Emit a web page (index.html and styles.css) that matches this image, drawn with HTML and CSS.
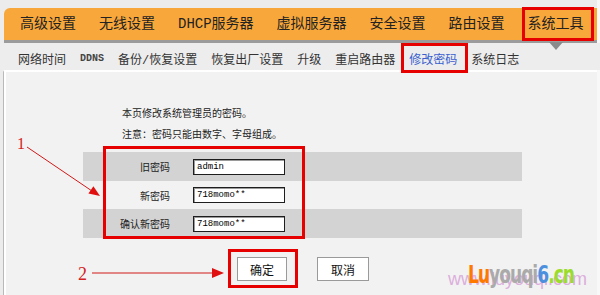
FILE: index.html
```html
<!DOCTYPE html>
<html lang="zh">
<head>
<meta charset="utf-8">
<title>修改密码</title>
<link rel="stylesheet" href="styles.css">
</head>
<body>
<div class="page">
  <nav class="topnav">
    <a class="tab">高级设置</a>
    <a class="tab">无线设置</a>
    <a class="tab">DHCP服务器</a>
    <a class="tab">虚拟服务器</a>
    <a class="tab">安全设置</a>
    <a class="tab">路由设置</a>
    <a class="tab active">系统工具</a>
  </nav>
  <nav class="subnav">
    <a class="sub">网络时间</a>
    <a class="sub latin">DDNS</a>
    <a class="sub">备份/恢复设置</a>
    <a class="sub">恢复出厂设置</a>
    <a class="sub">升级</a>
    <a class="sub">重启路由器</a>
    <a class="sub current">修改密码</a>
    <a class="sub">系统日志</a>
  </nav>
  <main class="content">
    <p class="note">本页修改系统管理员的密码。</p>
    <p class="note">注意：密码只能由数字、字母组成。</p>
    <div class="form">
      <div class="row shade"><label class="lbl">旧密码</label><div class="field"><input class="inp" value="admin"></div></div>
      <div class="row mid"><label class="lbl">新密码</label><div class="field"><input class="inp" value="718momo**"></div></div>
      <div class="row shade"><label class="lbl">确认新密码</label><div class="field"><input class="inp" value="718momo**"></div></div>
    </div>
    <div class="actions">
      <button class="btn">确定</button>
      <button class="btn wide">取消</button>
    </div>
  </main>
  <div class="watermark">
    <span class="wm-back">www.luyouqi.com</span>
    <span class="wm-front"><span class="c-or">Lu</span><span class="c-gr">youqi</span><span class="c-bl">6</span><span class="c-gn">.cn</span></span>
  </div>
  <svg class="marks" width="600" height="295" viewBox="0 0 600 295">
    <g fill="none" stroke="#e60000" stroke-width="3">
      <rect x="523.5" y="8.5" width="69" height="31"/>
      <rect x="402.5" y="44.5" width="64" height="27"/>
      <rect x="104.5" y="147.5" width="199" height="90"/>
      <rect x="229.5" y="250.5" width="67" height="36"/>
    </g>
    <g stroke="#d01818" stroke-width="1" fill="#e01010">
      <line x1="27" y1="147" x2="92" y2="191"/>
      <polygon points="100,196 88.4,193.6 93.4,186.2" stroke="none"/>
      <line x1="92" y1="273" x2="214" y2="273"/>
      <polygon points="224,273 212,268 212,278" stroke="none"/>
    </g>
    <text class="num" x="17" y="149" font-size="16">1</text>
    <text class="num" x="78" y="280" font-size="18">2</text>
  </svg>
</div>
</body>
</html>
```

FILE: styles.css
```css
* { box-sizing: border-box; }

body {
  margin: 0;
  width: 600px;
  height: 295px;
  overflow: hidden;
  background: #ececec;
  font-family: "Noto Sans CJK SC", sans-serif;
}

.page {
  position: relative;
  width: 600px;
  height: 295px;
  padding-top: 8px;
  background: linear-gradient(to right, #ececec 597px, #f8f8f8 597px);
}

.topnav {
  display: flex;
  margin-left: 4px;
  width: 593px;
  height: 35px;
  padding-left: 4.5px;
  background: #f8a73b;
  border-top-left-radius: 6px;
  border-bottom: 3px solid #9b9b9b;
  font-family: "Liberation Mono", "Noto Sans CJK SC", monospace;
}

.tab {
  position: relative;
  padding: 0 11.5px;
  font-size: 14px;
  line-height: 32px;
  color: #222;
  white-space: nowrap;
}

.tab.active::after {
  content: "";
  position: absolute;
  left: 50%;
  margin-left: -7px;
  top: 34px;
  border-left: 7px solid transparent;
  border-right: 7px solid transparent;
  border-top: 8px solid #8a8a8a;
}

.subnav {
  display: flex;
  gap: 14px;
  height: 27px;
  padding: 4px 0 0 18px;
  align-items: center;
  background: #ededed;
  font-size: 12px;
  color: #333;
  font-family: "Liberation Mono", "Noto Sans CJK SC", monospace;
}

.sub { white-space: nowrap; }
.sub.latin { font-size: 10px; font-weight: bold; color: #444; }
.sub.current { color: #3a5fcd; }

.content {
  margin-left: 3px;
  width: 594px;
  height: 225px;
  padding: 30px 0 0 0;
  background: #f2f2f2;
  border-left: 1px solid #b9b9b9;
  border-top: 2px solid #ffffff;
  box-shadow: inset 2px 0 0 #ffffff;
}

.note {
  margin: 0 0 0 118px;
  font-size: 10px;
  line-height: 21px;
  color: #222;
}

.form {
  display: grid;
  margin: 8px 0 0 79px;
  width: 439px;
}

.row {
  display: flex;
  align-items: center;
  height: 29px;
}

.row.mid { height: 28px; }
.shade { background: #d3d3d3; }

.lbl {
  width: 97px;
  padding-right: 10px;
  text-align: right;
  font-size: 10px;
  color: #222;
}

.field { padding-left: 13px; }

.inp {
  display: block;
  width: 92px;
  height: 16px;
  padding: 0 0 0 3px;
  border: 1px solid #1e1e1e;
  box-shadow: inset 1px 1px 0 #9a9a9a;
  background: #fff;
  color: #000;
  font: 9px/14px "Liberation Mono", monospace;
}

.actions {
  display: flex;
  gap: 30px;
  margin: 19px 0 0 233px;
}

.btn {
  width: 50px;
  height: 24px;
  padding: 0;
  background: #fff;
  border: 1px solid #9a9a9a;
  font-family: "Noto Sans CJK SC", sans-serif;
  font-size: 12px;
  color: #111;
}

.btn.wide { width: 52px; }

.watermark {
  position: absolute;
  left: 440px;
  top: 258px;
  width: 155px;
  height: 32px;
  display: grid;
}

.wm-back, .wm-front { grid-area: 1 / 1; align-self: end; }

.wm-back {
  justify-self: end;
  margin-right: 8px;
  font-family: "Liberation Sans", sans-serif;
  font-size: 18px;
  line-height: 22px;
  color: #dcaedc;
}

.wm-front {
  margin-left: 28px;
  font-family: "DejaVu Sans Condensed", "DejaVu Sans", sans-serif;
  font-weight: bold;
  font-size: 19px;
  line-height: 24px;
  letter-spacing: -1px;
  transform: scaleY(1.3);
  transform-origin: left bottom;
  white-space: nowrap;
}

.c-or { color: #ff7800; }
.c-gr { color: #aaaaaa; }
.c-bl { color: #4b8fde; }
.c-gn { color: #9bdc2c; }

.marks {
  position: absolute;
  left: 0;
  top: 0;
  pointer-events: none;
}

.num {
  font-family: "Liberation Serif", serif;
  fill: #d42020;
}
```
